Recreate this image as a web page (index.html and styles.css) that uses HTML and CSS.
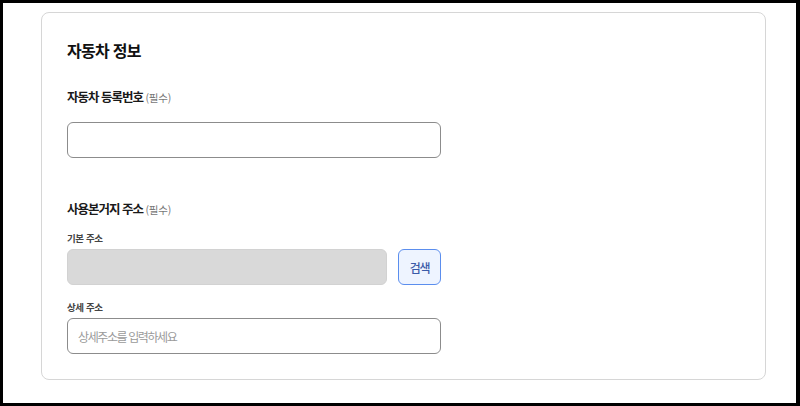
FILE: index.html
```html
<!DOCTYPE html>
<html lang="ko">
<head>
<meta charset="utf-8">
<link rel="stylesheet" href="styles.css">
</head>
<body>
<div class="frame">
  <section class="card">
    <h2 class="title">자동차 정보</h2>
    <div class="field">
      <div class="label">자동차 등록번호 <span class="req">(필수)</span></div>
      <input class="input" type="text">
    </div>
    <div class="group">
      <div class="label">사용본거지 주소 <span class="req">(필수)</span></div>
      <div class="sublabel">기본 주소</div>
      <div class="row">
        <input class="input disabled" type="text" disabled>
        <button class="btn" type="button">검색</button>
      </div>
      <div class="sublabel second">상세 주소</div>
      <input class="input" type="text" placeholder="상세주소를 입력하세요">
    </div>
  </section>
</div>
</body>
</html>
```
FILE: styles.css
```css
* { box-sizing: border-box; }
html, body { margin: 0; padding: 0; background: #fff; }
body {
  font-family: "Noto Sans CJK KR", "Noto Sans", sans-serif;
  color: #111;
}
.frame {
  width: 800px;
  height: 406px;
  border-style: solid;
  border-color: #000;
  border-width: 3px 4px 3px 3px;
  background: #fff;
  padding: 9px 0 0 38px;
}
.card {
  width: 725px;
  border: 1px solid #d6d6d6;
  border-radius: 8px;
  background: #fff;
  padding: 27px 25px 25px 25px;
}
.title {
  margin: 0;
  font-size: 16px;
  line-height: 20px;
  font-weight: 700;
  letter-spacing: -0.7px;
  color: #111;
}
.field { margin-top: 28px; }
.label {
  font-size: 12.5px;
  line-height: 18px;
  font-weight: 700;
  letter-spacing: -1px;
  color: #1a1a1a;
}
.req {
  font-size: 10.5px;
  line-height: 1;
  font-weight: 400;
  letter-spacing: -0.2px;
  color: #777;
}
.field .input { margin-top: 16px; }
.input {
  display: block;
  width: 374px;
  height: 36px;
  border: 1px solid #8c8c8c;
  border-radius: 6px;
  padding: 0 10px;
  font-family: inherit;
  font-size: 12px;
  letter-spacing: -1.4px;
  color: #222;
  background: #fff;
  outline: none;
}
.input::placeholder { color: #9a9a9a; }
.group { margin-top: 42px; }
.sublabel {
  margin-top: 13px;
  font-size: 9.5px;
  line-height: 14px;
  font-weight: 700;
  letter-spacing: -0.4px;
  color: #444;
}
.sublabel.second { margin-top: 15px; }
.row {
  display: flex;
  gap: 11px;
  margin-top: 4px;
  width: 374px;
}
.input.disabled {
  width: 320px;
  background: #d9d9d9;
  border-color: #d2d2d2;
}
.btn {
  width: 43px;
  height: 36px;
  border: 1px solid #5b8eee;
  border-radius: 6px;
  background: #eef4ff;
  color: #3a5ba8;
  font-family: inherit;
  font-size: 12px;
  font-weight: 500;
  letter-spacing: -1.2px;
  padding: 0;
}
.group > .input { margin-top: 4px; }
```
